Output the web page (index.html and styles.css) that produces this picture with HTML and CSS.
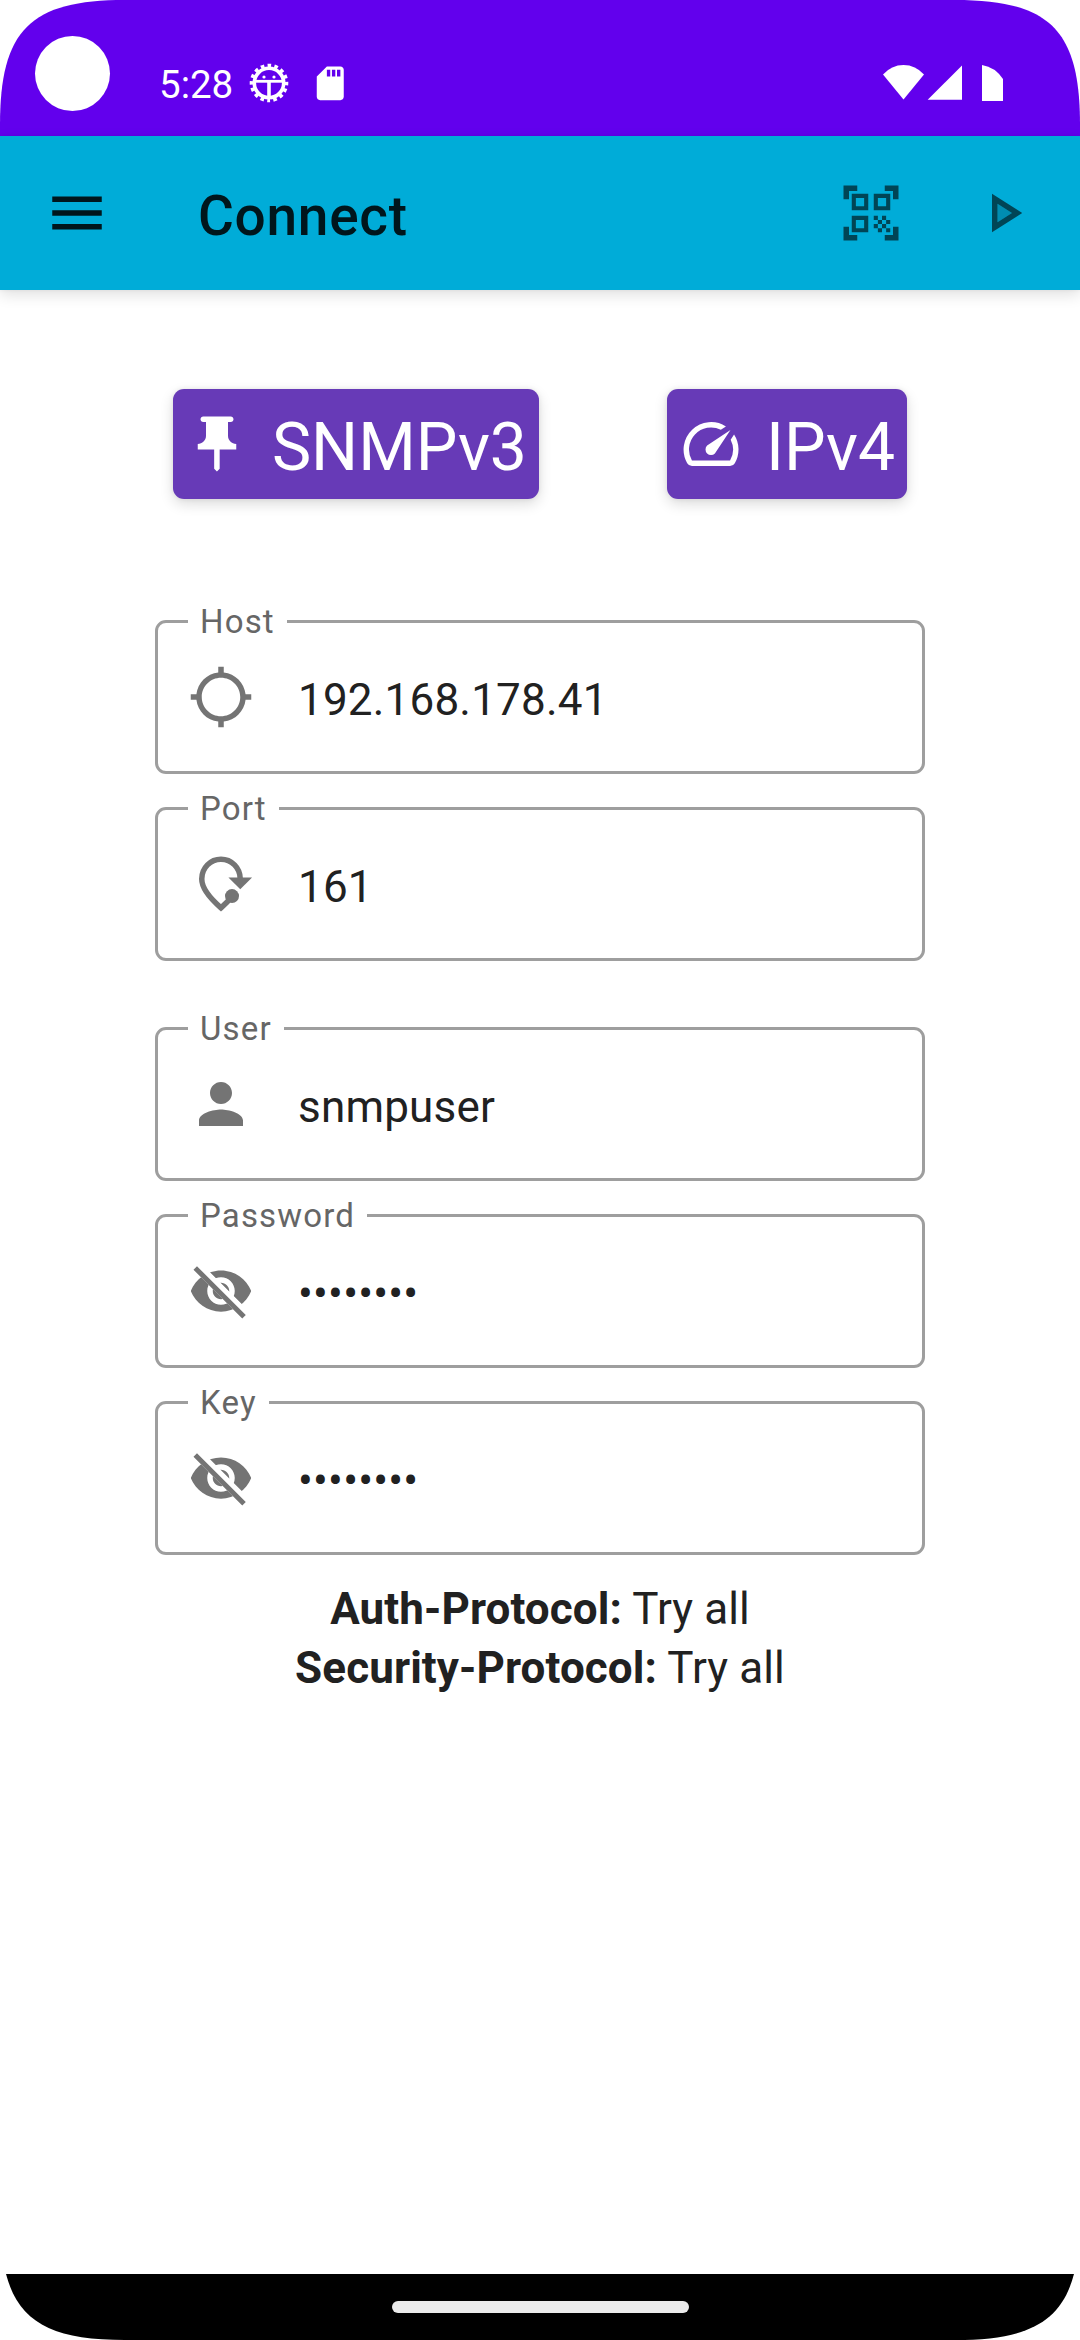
FILE: index.html
```html
<!DOCTYPE html>
<html lang="en">
<head>
<meta charset="utf-8">
<title>Connect</title>
<link rel="stylesheet" href="styles.css">
</head>
<body>
<div class="screen">
  <header class="status-bar">
    <span class="camera"></span>
    <span class="clock">5:28</span>
    <svg class="debug-icon" viewBox="-20 -20 40 40">
      <circle r="14.700" fill="none" stroke="#fff" stroke-width="3.600"/>
      <circle r="17.500" fill="none" stroke="#fff" stroke-width="3.600" stroke-dasharray="3.600 3.272" stroke-dashoffset="1.800" transform="rotate(90)"/>
      <path d="M-14-1.700H14" fill="none" stroke="#fff" stroke-width="2.800"/>
      <path d="M0-1V15" fill="none" stroke="#fff" stroke-width="3.600"/>
      <circle cx="-5" cy="-6" r="1.600" fill="#fff"/><circle cx="5" cy="-6" r="1.600" fill="#fff"/>
    </svg>
    <svg class="sd-icon" viewBox="0 0 24 24"><path fill="#fff" d="M18 2h-8L4.020 8 4 20c0 1.100.9 2 2 2h12c1.100 0 2-.9 2-2V4c0-1.100-.9-2-2-2zm-6 6h-2V4h2v4zm3 0h-2V4h2v4zm3 0h-2V4h2v4z"/></svg>
    <svg class="signals" viewBox="0 0 121 37">
      <path fill="#fff" d="M0 9.500Q8.500 0 20.500 0T41 9.500L20.500 34.500Z"/>
      <path fill="#fff" d="M44.700 34.700 79 .5V34.700Z"/>
      <path fill="#fff" d="M99 0Q112 2 120 14V36H99Z"/>
    </svg>
  </header>

  <nav class="app-bar">
    <svg class="icon icon-dark" viewBox="0 0 24 24"><path d="M3 18h18v-2H3v2zm0-5h18v-2H3v2zm0-7v2h18V6H3z"/></svg>
    <h1 class="title">Connect</h1>
    <svg class="icon icon-action" viewBox="0 0 24 24"><path d="M9.500 6.500v3h-3v-3H9.500M11 5H5v6h6V5zM9.500 14.500v3h-3v-3H9.500M11 13H5v6h6V13zM17.500 6.500v3h-3v-3H17.500M19 5h-6v6h6V5zM13 13h1.500v1.500H13V13zM14.500 14.500H16V16h-1.500V14.500zM16 13h1.500v1.500H16V13zM13 16h1.500v1.500H13V16zM14.500 17.500H16V19h-1.500V17.500zM16 16h1.500v1.500H16V16zM17.500 14.500H19V16h-1.500V14.500zM17.500 17.500H19V19h-1.500V17.500zM22 7h-2V4h-3V2h5V7zM22 22v-5h-2v3h-3v2H22zM2 22h5v-2H4v-3H2V22zM2 2v5h2V4h3V2H2z" fill-rule="evenodd"/></svg>
    <svg class="icon icon-action" viewBox="0 0 24 24"><path opacity=".3" d="M10 8.640v6.720L15.270 12z"/><path d="M8 19l11-7L8 5v14zm2-10.360L15.270 12 10 15.360V8.640z"/></svg>
  </nav>

  <main class="content">
    <div class="toggles">
      <button class="toggle">
        <svg class="icon" viewBox="0 0 24 24"><path d="M16 9V4h1c.55 0 1-.45 1-1s-.45-1-1-1H7c-.55 0-1 .45-1 1s.45 1 1 1h1v5c0 1.660-1.340 3-3 3v2h5.970v7l1 1 1-1v-7H19v-2c-1.660 0-3-1.340-3-3z"/></svg>
        <span class="toggle-text">SNMPv3</span>
      </button>
      <button class="toggle">
        <svg class="icon" viewBox="0 0 24 24"><path d="M20.380 8.570l-1.230 1.850a8 8 0 0 1-.22 7.580H5.070A8 8 0 0 1 15.580 6.850l1.850-1.230A10 10 0 0 0 3.350 19a2 2 0 0 0 1.720 1h13.850a2 2 0 0 0 1.740-1 10 10 0 0 0-.27-10.440zm-9.790 6.840a2 2 0 0 0 2.830 0l5.660-8.490-8.490 5.660a2 2 0 0 0 0 2.830z"/></svg>
        <span class="toggle-text">IPv4</span>
      </button>
    </div>

    <div class="field-group">
      <div class="field">
        <span class="label">Host</span>
        <svg class="icon" viewBox="0 0 24 24"><path d="M20.940 11c-.46-4.170-3.770-7.480-7.940-7.940V1h-2v2.060C6.830 3.520 3.520 6.830 3.060 11H1v2h2.060c.46 4.170 3.770 7.480 7.940 7.940V23h2v-2.060c4.170-.46 7.480-3.770 7.940-7.940H23v-2h-2.060zM12 19c-3.870 0-7-3.130-7-7s3.130-7 7-7 7 3.130 7 7-3.130 7-7 7z"/></svg>
        <span class="value">192.168.178.41</span>
      </div>
      <div class="field">
        <span class="label">Port</span>
        <svg class="icon" viewBox="0 0 24 24"><path d="M19 10.200C19 6.100 15.800 3 12 3S5 6.100 5 10.200c0 2.900 2.300 6.400 7 10.470 1.400-1.200 2.800-2.600 4-4.100" fill="none" stroke="currentColor" stroke-width="2"/><path d="M14.700 9.600h8.600L19 13.900z"/><circle cx="16" cy="16.400" r="2.550"/></svg>
        <span class="value">161</span>
      </div>
    </div>

    <div class="field-group credentials">
      <div class="field">
        <span class="label">User</span>
        <svg class="icon" viewBox="0 0 24 24"><path d="M12 12c2.210 0 4-1.790 4-4s-1.790-4-4-4-4 1.790-4 4 1.790 4 4 4zm0 2c-2.670 0-8 1.340-8 4v2h16v-2c0-2.660-5.330-4-8-4z"/></svg>
        <span class="value">snmpuser</span>
      </div>
      <div class="field">
        <span class="label">Password</span>
        <svg class="icon" viewBox="0 0 24 24">
          <clipPath id="eye-cut"><path d="M2 4.270 19.730 22l2.540-2.540L4.540 1.730V1H23v22H1V4.270z"/></clipPath>
          <path clip-path="url(#eye-cut)" d="M12 4.500C7 4.500 2.730 7.610 1 12c1.730 4.390 6 7.500 11 7.500s9.270-3.110 11-7.500c-1.730-4.390-6-7.500-11-7.500zM12 17c-2.760 0-5-2.240-5-5s2.240-5 5-5 5 2.240 5 5-2.240 5-5 5zm0-8c-1.660 0-3 1.340-3 3s1.340 3 3 3 3-1.340 3-3-1.340-3-3-3z"/>
          <path d="M3.270 4.270 19.740 20.740" stroke="currentColor" stroke-width="1.800" stroke-linecap="square"/>
        </svg>
        <span class="value">••••••••</span>
      </div>
      <div class="field">
        <span class="label">Key</span>
        <svg class="icon" viewBox="0 0 24 24">
          <path clip-path="url(#eye-cut)" d="M12 4.500C7 4.500 2.730 7.610 1 12c1.730 4.390 6 7.500 11 7.500s9.270-3.110 11-7.500c-1.730-4.390-6-7.500-11-7.500zM12 17c-2.760 0-5-2.240-5-5s2.240-5 5-5 5 2.240 5 5-2.240 5-5 5zm0-8c-1.660 0-3 1.340-3 3s1.340 3 3 3 3-1.340 3-3-1.340-3-3-3z"/>
          <path d="M3.270 4.270 19.740 20.740" stroke="currentColor" stroke-width="1.800" stroke-linecap="square"/>
        </svg>
        <span class="value">••••••••</span>
      </div>
    </div>

    <div class="protocols">
      <div><b>Auth-Protocol:</b> Try all</div>
      <div><b>Security-Protocol:</b> Try all</div>
    </div>
  </main>

  <footer class="nav-bar"><span class="handle"></span></footer>
</div>
</body>
</html>
```
FILE: styles.css
```css
body {
  margin: 0;
  background: #fff;
  font-family: Roboto, sans-serif;
}

.screen {
  display: flex;
  flex-direction: column;
  width: 1080px;
  height: 2340px;
  background: #fff;
  clip-path: path("M0 125C0 30 30 0 125 0H955C1050 0 1080 30 1080 125V2215C1080 2310 1050 2340 955 2340H125C30 2340 0 2310 0 2215Z");
}

.status-bar {
  display: flex;
  align-items: flex-start;
  box-sizing: border-box;
  height: 136px;
  padding: 36px 76px 0 35px;
  background: #6200ed;
}

.camera {
  width: 75px;
  height: 75px;
  border-radius: 50%;
  background: #fff;
}

.clock {
  width: 76px;
  margin: 26px 0 0 49px;
  color: #fff;
  font-size: 38.5px;
  line-height: 46px;
}

.debug-icon {
  width: 40px;
  height: 40px;
  margin: 27px 0 0 14px;
}

.sd-icon {
  width: 40.5px;
  height: 40.5px;
  margin: 26.5px 0 0 21px;
}

.signals {
  width: 121px;
  height: 37px;
  margin: 29px 0 0 auto;
}

.app-bar {
  display: flex;
  align-items: center;
  box-sizing: border-box;
  height: 154px;
  padding: 0 44px;
  background: #00acd8;
  box-shadow: 0 5px 14px rgba(0, 0, 0, 0.12), 0 0 4px rgba(0, 0, 0, 0.06);
}

.icon {
  flex: none;
  width: 66px;
  height: 66px;
  fill: currentColor;
}

.icon-dark {
  color: #00161c;
}

.icon-action {
  margin-left: 66px;
  color: #004556;
}

.title {
  flex: 1;
  margin: 0;
  padding: 5px 0 0 88px;
  color: #00161c;
  font-size: 55px;
  font-weight: 500;
  letter-spacing: 0.7px;
}

.content {
  display: flex;
  flex: 1;
  flex-direction: column;
  align-items: center;
  padding-top: 99px;
}

.toggles {
  display: flex;
  gap: 128px;
  margin-bottom: 121px;
}

.toggle {
  display: flex;
  align-items: center;
  gap: 22px;
  height: 110px;
  padding: 0 12px 0 11px;
  border: 0;
  border-radius: 11px;
  background: #673ab7;
  box-shadow: 0 5px 14px rgba(0, 0, 0, 0.14), 0 0 5px rgba(0, 0, 0, 0.08);
  color: #fff;
  font: 66px Roboto, sans-serif;
}

.toggle-text {
  padding-top: 7px;
}

.field-group {
  display: flex;
  flex-direction: column;
  gap: 33px;
  margin-bottom: 66px;
}

.credentials {
  margin-bottom: 25px;
}

.field {
  position: relative;
  display: flex;
  align-items: center;
  gap: 44px;
  box-sizing: border-box;
  width: 770px;
  height: 154px;
  padding: 0 30px;
  border: 3px solid #9e9e9e;
  border-radius: 11px;
  color: #747474;
}

.label {
  position: absolute;
  top: -21px;
  left: 30px;
  padding: 0 12px;
  background: #fff;
  color: #666;
  font-size: 33px;
  line-height: 39px;
  letter-spacing: 1.15px;
}

.value {
  padding-top: 6px;
  color: #212121;
  font-size: 44px;
  letter-spacing: 0.2px;
}

.protocols {
  color: #212121;
  font-size: 44px;
  line-height: 59px;
  letter-spacing: 0.1px;
  text-align: center;
}

.nav-bar {
  display: flex;
  align-items: center;
  justify-content: center;
  height: 66px;
  background: #000;
}

.handle {
  width: 297px;
  height: 12px;
  border-radius: 6px;
  background: #ebebeb;
}
```
